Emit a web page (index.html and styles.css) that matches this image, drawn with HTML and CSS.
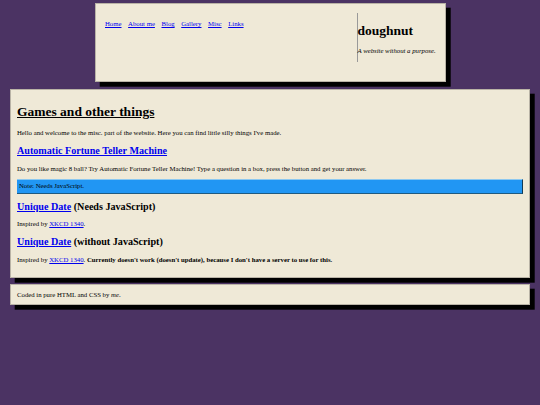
FILE: index.html
```html
<!DOCTYPE html>
<html lang="en">
<head>
    <meta charset="UTF-8">
    <meta name="viewport" content="width=device-width, initial-scale=1.0">
    <title>doughnut</title>
    <link rel="stylesheet" href="styles.css">
</head>
<body>
    <header class="top">
        <nav class="menu">
            <a href="#">Home</a>
            <a href="#">About me</a>
            <a href="#">Blog</a>
            <a href="#">Gallery</a>
            <a href="#">Misc</a>
            <a href="#">Links</a>
        </nav>
        <div class="brand">
            <h2>doughnut</h2>
            <p><em>A website without a purpose.</em></p>
        </div>
    </header>

    <main class="box content">
        <h1>Games and other things</h1>
        <p>Hello and welcome to the misc. part of the website. Here you can find little silly things I've made.</p>
        <h3><a href="#">Automatic Fortune Teller Machine</a></h3>
        <p>Do you like magic 8 ball? Try Automatic Fortune Teller Machine! Type a question in a box, press the button and get your answer.</p>
        <div class="note">Note: Needs JavaScript.</div>
        <h3><a href="#">Unique Date</a> (Needs JavaScript)</h3>
        <p>Inspired by <a href="#">XKCD 1340</a>.</p>
        <h3><a href="#">Unique Date</a> (without JavaScript)</h3>
        <p>Inspired by <a href="#">XKCD 1340</a>. <strong>Currently doesn't work (doesn't update), because I don't have a server to use for this.</strong></p>
    </main>

    <footer class="box foot">
        Coded in pure HTML and CSS by <em>me</em>.
    </footer>
</body>
</html>
```

FILE: styles.css
```css
html, body {
    height: 100%;
}

body {
    font-family: "Liberation Serif", serif;
    font-size: 6.75px;
    line-height: 1.15;
    color: #000;
    background-color: #4b3363;
    margin: 0;
    padding: 3px 10px 0;
    box-sizing: border-box;
}

a {
    color: #0000ee;
}

.top, .box {
    background-color: #efe9d7;
    border: 1px solid #b9b3a6;
    box-shadow: 4.7px 4.7px 0 #000;
    box-sizing: border-box;
}

.top {
    display: flex;
    justify-content: space-between;
    width: 351px;
    height: 79px;
    margin: 0 auto 6.5px;
    padding: 9px 9px 0 9.5px;
}

.menu {
    display: flex;
    gap: 6.6px;
    margin-top: 7px;
    height: 10px;
}

.brand {
    width: 78px;
    height: 49px;
    border-left: 1px solid #999;
    white-space: nowrap;
}

.brand h2 {
    font-size: 13.5px;
    margin: 10px 0 8.5px;
}

.brand p {
    margin: 0;
}

.content {
    height: 189.5px;
    padding: 14.5px 6px 0;
    margin-bottom: 6px;
}

.content h1 {
    font-size: 13.5px;
    text-decoration: underline;
    margin: 0 0 9.5px;
}

.content h3 {
    font-size: 10.125px;
    margin: 8.5px 0 7.7px;
}

.content p {
    margin: 7px 0;
}

.note {
    background-color: #2196f3;
    border-right: 1px solid #123a55;
    border-bottom: 1px solid #1f5a80;
    border-top: 1px solid #8cc8f0;
    padding: 2px 2px 2.5px;
    margin: 7px 0;
}

.note + h3 {
    margin-top: 6.75px;
}

.foot {
    height: 21px;
    padding: 6px 6px 0;
}
```
